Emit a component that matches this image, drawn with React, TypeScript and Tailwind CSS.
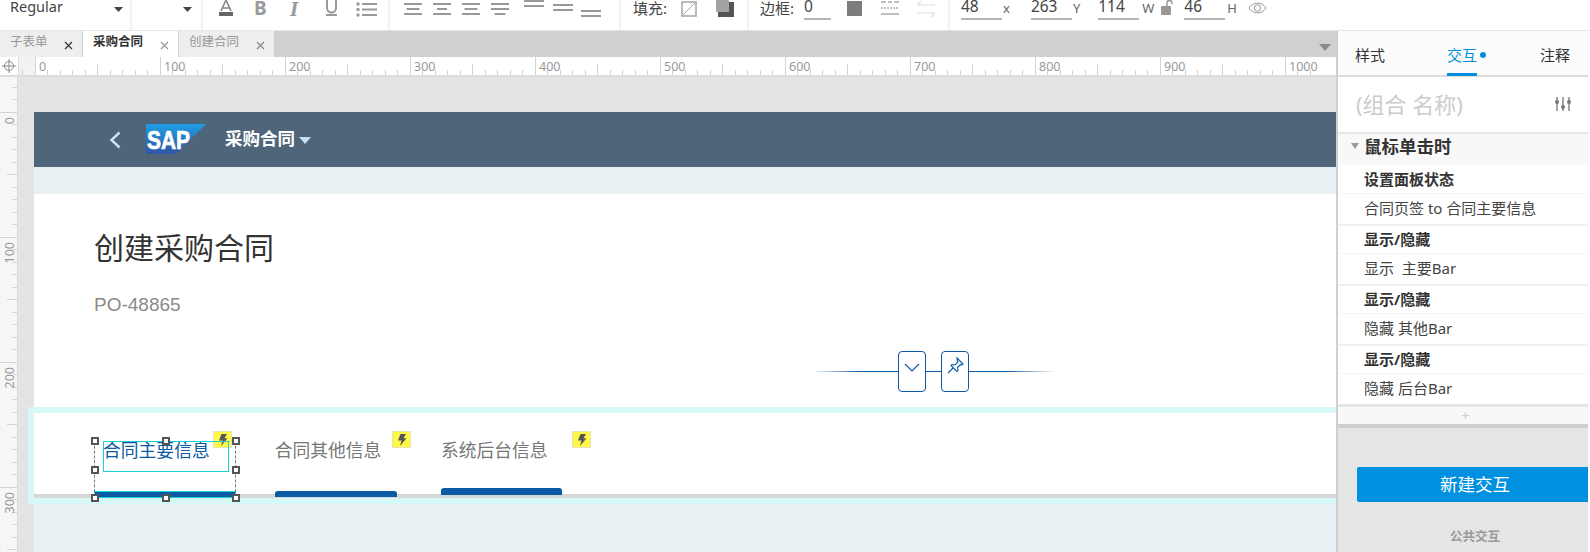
import React from "react";

const FONT = '"Noto Sans", "Noto Sans CJK SC", sans-serif';

function Caret({ className = "" }: { className?: string }) {
  return (
    <svg width="9" height="5" viewBox="0 0 9 5" className={className}>
      <path d="M0 0h9L4.5 5z" fill="#444" />
    </svg>
  );
}

function Lines({ widths, w = 18, gap = 3, color = "#999" }: { widths: number[]; w?: number; gap?: number; color?: string }) {
  const h = widths.length * (gap + 2);
  return (
    <svg width={w} height={h} viewBox={`0 0 ${w} ${h}`}>
      {widths.map((b, i) => (
        <rect key={i} x={(w - b) / 2} y={i * (gap + 2)} width={b} height="2" fill={color} />
      ))}
    </svg>
  );
}

function Field({ value, width }: { value: string; width: string }) {
  return (
    <div className={`${width} h-[20px] border-b-2 border-[#b5b5b5] text-[15.5px] leading-[13px] text-[#444]`}>{value}</div>
  );
}

function Toolbar() {
  const sep = "flex h-[30px] items-start border-r-2 border-[#f1f1f1]";
  const small = "mt-[2px] text-[13px] leading-[12px] text-[#666]";
  return (
    <div className="flex h-[31px] shrink-0 overflow-hidden border-b border-[#e6e6e6] bg-white">
      <div className={`${sep} w-[132px] pl-[10px]`}>
        <span className="text-[14.500px] leading-[13px] text-[#444]">Regular</span>
        <Caret className="ml-[51px] mt-[7px]" />
      </div>
      <div className={`${sep} w-[71px] pl-[51px]`}>
        <Caret className="mt-[7px]" />
      </div>
      <div className={`${sep} w-[187px] pl-[16px]`}>
        <svg width="14" height="17" viewBox="0 0 14 17">
          <path d="M2 11 7 0l5 11M4 8h6" fill="none" stroke="#888" strokeWidth="1.6" />
          <rect x="0" y="12" width="14" height="4" fill="#666" />
        </svg>
        <span className="ml-[21px] text-[19px] font-bold leading-[17px] text-[#999]">B</span>
        <span className="ml-[23px] text-[22px] font-bold italic leading-[17px] text-[#999]" style={{ fontFamily: '"Liberation Serif", serif' }}>I</span>
        <svg className="ml-[27px]" width="13" height="17" viewBox="0 0 13 17">
          <path d="M2 0v8a4.500 4.500 0 0 0 9 0V0" fill="none" stroke="#999" strokeWidth="2" />
          <rect x="1" y="14" width="11" height="2" fill="#999" />
        </svg>
        <svg className="ml-[18px] mt-[2px]" width="21" height="15" viewBox="0 0 21 15">
          <circle cx="2" cy="2" r="1.700" fill="#999" />
          <circle cx="2" cy="7.500" r="1.700" fill="#999" />
          <circle cx="2" cy="13" r="1.700" fill="#999" />
          <rect x="6" y="1" width="15" height="2" fill="#999" />
          <rect x="6" y="6.500" width="15" height="2" fill="#999" />
          <rect x="6" y="12" width="15" height="2" fill="#999" />
        </svg>
      </div>
      <div className={`${sep} w-[231px] pl-[14px]`}>
        <div className="mt-[3px] flex gap-[11px]">
          <Lines widths={[18, 13, 18]} />
          <Lines widths={[18, 10, 18]} />
          <Lines widths={[18, 13, 18]} />
          <Lines widths={[18, 18, 11]} />
        </div>
        <div className="ml-[15px] flex items-start gap-[8.500px]">
          <Lines w={20} widths={[20, 20]} />
          <div className="mt-[4px]"><Lines w={20} widths={[20, 20]} /></div>
          <div className="mt-[10px]"><Lines w={20} widths={[20, 20]} /></div>
        </div>
      </div>
      <div className={`${sep} w-[128px] pl-[12px]`}>
        <span className="text-[15px] leading-[17px] text-[#444]">填充:</span>
        <svg className="ml-[14px] mt-px" width="16" height="16" viewBox="0 0 16 16">
          <rect x="1" y="1" width="14" height="14" fill="none" stroke="#aaa" strokeWidth="1.600" />
          <path d="M2 14 14 2" stroke="#aaa" strokeWidth="1" />
        </svg>
        <svg className="ml-[19px]" width="18" height="17" viewBox="0 0 18 17">
          <rect x="2" y="2" width="16" height="15" fill="#555" />
          <rect x="0" y="0" width="13" height="12" rx="1" fill="#a3a3a3" />
        </svg>
      </div>
      <div className={`${sep} w-[201px] pl-[11px]`}>
        <span className="text-[15px] leading-[17px] text-[#444]">边框:</span>
        <div className="ml-[10px]"><Field value="0" width="w-[27px]" /></div>
        <div className="ml-[16px] mt-px h-[15px] w-[15px] bg-[#7c7c7c]" />
        <svg className="ml-[19px] mt-px" width="18" height="15" viewBox="0 0 18 15">
          <path d="M0 1h5M7 1h4M13 1h5" stroke="#aaa" strokeWidth="1.500" />
          <path d="M0 7h18" stroke="#aaa" strokeWidth="1.500" strokeDasharray="2 1" />
          <path d="M0 13h18" stroke="#aaa" strokeWidth="1.500" />
        </svg>
        <svg className="ml-[18px] mt-px" width="18" height="16" viewBox="0 0 18 16">
          <path d="M4 0 0 4h18M14 16l4-4H0" fill="none" stroke="#ddd" strokeWidth="1.200" />
        </svg>
      </div>
      <div className="flex h-[30px] flex-1 items-start pl-[11px]">
        <Field value="48" width="w-[41px]" />
        <span className={`ml-[1px] ${small}`}>x</span>
        <div className="ml-[21px]"><Field value="263" width="w-[41px]" /></div>
        <span className={`ml-[1px] ${small}`}>Y</span>
        <div className="ml-[18px]"><Field value="114" width="w-[41px]" /></div>
        <span className={`ml-[3px] ${small}`}>W</span>
        <svg className="ml-[7px]" width="13" height="15" viewBox="0 0 13 15">
          <rect x="0" y="6" width="10" height="9" rx="1" fill="#999" />
          <path d="M6 6V3a2.500 2.500 0 0 1 5 0v1" fill="none" stroke="#999" strokeWidth="1.500" />
        </svg>
        <div className="ml-[10px]"><Field value="46" width="w-[41px]" /></div>
        <span className={`ml-[2px] ${small}`}>H</span>
        <svg className="ml-[11px] mt-px" width="19" height="14" viewBox="0 0 19 14">
          <path d="M1 7c4-6.500 13-6.500 17 0-4 6.500-13 6.500-17 0z" fill="none" stroke="#999" strokeWidth="1" />
          <circle cx="9.500" cy="7" r="3.200" fill="none" stroke="#999" strokeWidth="1" />
        </svg>
      </div>
    </div>
  );
}

function TabX({ color }: { color: string }) {
  return (
    <svg width="9" height="9" viewBox="0 0 9 9" className="absolute right-[9px] top-[10px]">
      <path d="M1 1l7 7M8 1 1 8" stroke={color} strokeWidth="1.200" />
    </svg>
  );
}

function DocTabs() {
  return (
    <div className="flex h-[26px] items-stretch bg-[#d0d0d0]">
      <div className="relative mr-px w-[82px] bg-[#eeeeee] pl-[10px] text-[12.500px] leading-[22px] text-[#999]">
        子表单
        <TabX color="#333" />
      </div>
      <div className="relative mr-px w-[95px] bg-white pl-[10px] text-[12.500px] font-bold leading-[22px] text-[#333]">
        采购合同
        <TabX color="#999" />
      </div>
      <div className="relative w-[95px] bg-[#eeeeee] pl-[10px] text-[12.500px] leading-[22px] text-[#999]">
        创建合同
        <TabX color="#888" />
      </div>
      <div className="ml-auto mr-[5px] mt-[13px]">
        <svg width="12" height="7" viewBox="0 0 12 7"><path d="M0 0h12L6 7z" fill="#8c8c8c" /></svg>
      </div>
    </div>
  );
}

function HRuler() {
  const labels = [0, 100, 200, 300, 400, 500, 600, 700, 800, 900, 1000];
  const ticks: number[] = [];
  for (let i = -1; i < 103; i++) ticks.push(i);
  return (
    <div className="flex h-[20px] border-b-2 border-[#dcdcdc] bg-white">
      <div className="flex w-[18px] items-center justify-center bg-white">
        <svg width="14" height="14" viewBox="0 0 14 14">
          <circle cx="7" cy="7" r="4.500" fill="none" stroke="#888" strokeWidth="1" />
          <path d="M7 0v14M0 7h14" stroke="#888" strokeWidth="1" />
        </svg>
      </div>
      <div className="relative flex-1 overflow-hidden border-l border-[#dcdcdc]">
        <div className="absolute bottom-0 left-0 top-0 w-[16px] bg-[#f2f2f2]" />
        <svg width="1320" height="18" viewBox="0 0 1320 18" className="absolute left-0 top-0">
          {ticks.map((i) => {
            const x = 16 + i * 12.5;
            const major = i % 10 === 0;
            const mid = i % 5 === 0;
            return (
              <line
                key={i}
                x1={x}
                x2={x}
                y1={major ? 0 : mid ? 7 : 13}
                y2={18}
                stroke="#d4d4d4"
                strokeWidth="1"
                shapeRendering="crispEdges"
              />
            );
          })}
          {labels.map((l, i) => (
            <text key={l} x={20 + i * 125} y={14} fontSize="12.500" fill="#999" fontFamily={FONT}>
              {l}
            </text>
          ))}
        </svg>
      </div>
    </div>
  );
}

function VRuler() {
  const ticks: number[] = [];
  for (let i = -3; i < 36; i++) ticks.push(i);
  const labels = [0, 100, 200, 300];
  return (
    <div className="relative w-[18px] shrink-0 overflow-hidden border-r border-[#dcdcdc] bg-[#f6f6f6]">
      <svg width="18" height="475" viewBox="0 0 18 475" className="absolute left-0 top-0">
        {ticks.map((i) => {
          const y = 35 + i * 12.5;
          const major = i % 10 === 0;
          const mid = i % 5 === 0;
          return (
            <line
              key={i}
              y1={y}
              y2={y}
              x1={major ? 0 : mid ? 7 : 12}
              x2={18}
              stroke="#d4d4d4"
              strokeWidth="1"
              shapeRendering="crispEdges"
            />
          );
        })}
        {labels.map((l, i) => (
          <text
            key={l}
            transform={`translate(14 ${i * 125 + 40}) rotate(-90)`}
            fontSize="12.500"
            fill="#999"
            fontFamily={FONT}
            textAnchor="end"
          >
            {l}
          </text>
        ))}
      </svg>
    </div>
  );
}

function Bolt({ className }: { className: string }) {
  return (
    <div className={`absolute flex h-[17px] w-[19px] items-center justify-center border border-[#e5e5b0] bg-[#fff84a] ${className}`}>
      <svg width="10" height="12" viewBox="0 0 10 12">
        <path d="M3.500 0H9L6.500 4.300H9.500L3 12l1.500-5.500H1z" fill="#555" />
      </svg>
    </div>
  );
}

function Handle({ className }: { className: string }) {
  return <div className={`absolute h-[8px] w-[8px] border-2 border-[#555] bg-white ${className}`} />;
}

function TabLabel({ text, color, ml }: { text: string; color: string; ml: string }) {
  return <div className={`${ml} text-[17.800px] leading-[24px] ${color}`}>{text}</div>;
}

function Page() {
  return (
    <div className="mt-[35px] min-w-0 flex-1">
      <div className="flex h-[55px] items-center bg-[#4f667a]">
        <svg className="ml-[75px]" width="12" height="18" viewBox="0 0 12 18">
          <path d="M10.500 1.500 2.500 9l8 7.500" fill="none" stroke="#cfe3f2" strokeWidth="2.400" />
        </svg>
        <svg className="ml-[25px] -mt-px" width="60" height="30" viewBox="0 0 60 30">
          <defs>
            <linearGradient id="sapg" x1="0" y1="0" x2="0" y2="1">
              <stop offset="0" stopColor="#1f9fe6" />
              <stop offset="1" stopColor="#2f55a6" />
            </linearGradient>
          </defs>
          <path d="M0 0h60L30 30H0z" fill="url(#sapg)" />
          <text x="1" y="25" fontSize="26" fontWeight="700" fill="#fff" stroke="#fff" strokeWidth="0.700" fontFamily='"Liberation Sans", sans-serif' textLength="43" lengthAdjust="spacingAndGlyphs">
            SAP
          </text>
        </svg>
        <span className="ml-[19px] -mt-[3px] text-[17.500px] font-bold leading-[20px] text-white">采购合同</span>
        <svg className="ml-[4px] mt-[2px]" width="12" height="7" viewBox="0 0 12 7"><path d="M0 0h12L6 7z" fill="#c5e0f5" /></svg>
      </div>
      <div className="h-[27px] bg-[#e8f0f3]" />
      <div className="h-[213px] bg-white pl-[60px] pt-[33px]">
        <div className="text-[30px] leading-[42px] text-[#333]">创建采购合同</div>
        <div className="mt-[24px] text-[19px] leading-[24px] text-[#8a8a8a]" style={{ fontFamily: '"Liberation Sans", sans-serif' }}>PO-48865</div>
        <div className="relative ml-[718px] mt-[34px] flex h-[41px] w-[243px] items-center justify-center">
          <div className="absolute left-0 right-0 top-[20px] h-[1px] bg-[linear-gradient(to_right,transparent,#0a5aa5_20%,#0a5aa5_80%,transparent)]" />
          <div className="relative flex h-[41px] w-[28px] items-center justify-center rounded-[4px] border-[1.500px] border-[#0a5aa5] bg-white">
            <svg className="-mt-[8px]" width="16" height="9" viewBox="0 0 16 9"><path d="M1 1l7 7 7-7" fill="none" stroke="#0a5aa5" strokeWidth="1.200" /></svg>
          </div>
          <div className="relative ml-[15px] flex h-[41px] w-[28px] items-start justify-center rounded-[4px] border-[1.500px] border-[#0a5aa5] bg-white pt-[5px]">
            <svg width="17" height="17" viewBox="0 0 17 17">
              <path d="M10 1l6 6-1.500 1-1-.5-3 3 .5 3-1 1-6-6 1-1 3 .5 3-3-.5-1zM6 11l-5 5" fill="none" stroke="#0a5aa5" strokeWidth="1.100" />
            </svg>
          </div>
        </div>
      </div>
      <div className="relative h-[97px] border-y-[6px] border-[#d6f8f6] bg-white">
        <div className="absolute bottom-[-6px] left-[-6px] top-[-6px] w-[6px] bg-[#d6f8f6]" />
        <div className="absolute bottom-0 left-0 right-0 h-[4px] bg-[#d8d8d8]" />
        <div className="flex pt-[25px]">
          <TabLabel text="合同主要信息" color="text-[#0a5aa5]" ml="ml-[69px]" />
          <TabLabel text="合同其他信息" color="text-[#777]" ml="ml-[65px]" />
          <TabLabel text="系统后台信息" color="text-[#777]" ml="ml-[59.500px]" />
        </div>
        <div className="absolute bottom-[1px] left-[60px] h-[6px] w-[142px] bg-[#0a5aa5]" />
        <div className="absolute bottom-[1px] left-[241px] h-[6px] w-[122px] rounded-t-[3px] bg-[#0a5aa5]" />
        <div className="absolute bottom-[3px] left-[407px] h-[7px] w-[121px] rounded-t-[3px] bg-[#0a5aa5]" />
        <Bolt className="left-[179px] top-[18px]" />
        <Bolt className="left-[358px] top-[18px]" />
        <Bolt className="left-[538px] top-[18px]" />
        {/* selection overlay */}
        <div className="absolute left-[69px] top-[28px] h-[31px] w-[126px] border border-[#17d3d6]" />
        <div className="absolute bottom-[0px] left-[60px] h-[7px] w-[142px] border border-[#17d3d6]" />
        <div className="absolute left-[60px] top-[28px] h-[56px] w-[142px] border-x border-dashed border-[#777]" />
        <Handle className="left-[57px] top-[24px]" />
        <Handle className="left-[128px] top-[24px]" />
        <Handle className="left-[198px] top-[24px]" />
        <Handle className="left-[57px] top-[53px]" />
        <Handle className="left-[198px] top-[53px]" />
        <Handle className="left-[57px] top-[81px]" />
        <Handle className="left-[128px] top-[81px]" />
        <Handle className="left-[198px] top-[81px]" />
      </div>
      <div className="h-[60px] bg-[#e8f0f3]" />
    </div>
  );
}

function ActionRows({ title, value, first }: { title: string; value: string; first?: boolean }) {
  return (
    <div className={first ? "" : "border-t-2 border-[#f0f0f0]"}>
      <div className={`${first ? "h-[29px] leading-[28px]" : "h-[28px] leading-[26px]"} border-b border-[#f5f5f5] pl-[26px] text-[15px] font-bold text-[#333]`}>{title}</div>
      <div className={`${first ? "leading-[29px]" : "leading-[28px]"} h-[30px] whitespace-pre pl-[26px] text-[15px] text-[#444]`}>{value}</div>
    </div>
  );
}

function Panel() {
  return (
    <div className="flex w-[254px] shrink-0 flex-col border-l-2 border-[#cfcfcf] bg-white pr-[2px]">
      <div className="flex h-[46px] border-b-2 border-[#dddddd] bg-[#fcfcfc] text-[15px]">
        <div className="ml-[17px] mt-[12px] leading-[24px] text-[#333]">样式</div>
        <div className="relative ml-[62px] mt-[12px] h-[33px] border-b-[3px] border-[#0090e0] leading-[24px] text-[#0090e0]">
          交互
          <div className="absolute left-[33px] top-[9px] h-[6px] w-[6px] rounded-full bg-[#0090e0]" />
        </div>
        <div className="ml-[63px] mt-[12px] leading-[24px] text-[#333]">注释</div>
      </div>
      <div className="flex h-[55px] items-center justify-between pb-[2px] pl-[18px] pr-[17px]">
        <span className="text-[22px] leading-[28px] text-[#cccccc]">(组合 名称)</span>
        <svg width="16" height="14" viewBox="0 0 16 14">
          <path d="M2 0v14M8 0v14M14 0v14" stroke="#777" strokeWidth="1.300" />
          <circle cx="2" cy="5" r="2" fill="#777" />
          <circle cx="8" cy="10" r="2" fill="#777" />
          <circle cx="14" cy="5" r="2" fill="#777" />
        </svg>
      </div>
      <div className="flex h-[33px] items-center border-t-2 border-[#e6e6e6] bg-[#f8f8f8] pb-[7px]">
        <svg className="ml-[13px]" width="8" height="6" viewBox="0 0 8 6"><path d="M0 0h8L4 6z" fill="#999" /></svg>
        <span className="ml-[5px] text-[17.500px] font-bold leading-[24px] text-[#333]">鼠标单击时</span>
      </div>
      <ActionRows first title="设置面板状态" value="合同页签 to 合同主要信息" />
      <ActionRows title="显示/隐藏" value="显示  主要Bar" />
      <ActionRows title="显示/隐藏" value="隐藏 其他Bar" />
      <ActionRows title="显示/隐藏" value="隐藏 后台Bar" />
      <div className="flex h-[24px] items-center justify-center border-t-[3px] border-b-[4px] border-t-[#e6e6e6] border-b-[#cfcfcf] bg-[#f8f8f8] pl-[5px] text-[15px] text-[#cccccc]">
        +
      </div>
      <div className="flex flex-1 flex-col bg-[#e5e5e5] pl-[19px]">
        <div className="mt-[39px] flex h-[35px] items-center justify-center rounded-l-[2px] bg-[#0090e0] pl-[5px] text-[17.500px] text-white">
          新建交互
        </div>
        <div className="mt-[26px] pl-[5px] text-center text-[12.500px] font-bold text-[#999]">公共交互</div>
      </div>
    </div>
  );
}

export default function App() {
  return (
    <div className="flex h-[552px] w-[1590px] flex-col overflow-hidden bg-white" style={{ fontFamily: FONT }}>
      <Toolbar />
      <div className="flex min-h-0 flex-1">
        <div className="flex w-[1336px] shrink-0 flex-col">
          <DocTabs />
          <HRuler />
          <div className="flex min-h-0 flex-1">
            <VRuler />
            <div className="flex min-w-0 flex-1 overflow-hidden bg-[#e4e4e4] pl-[16px]">
              <Page />
            </div>
          </div>
        </div>
        <Panel />
      </div>
    </div>
  );
}
